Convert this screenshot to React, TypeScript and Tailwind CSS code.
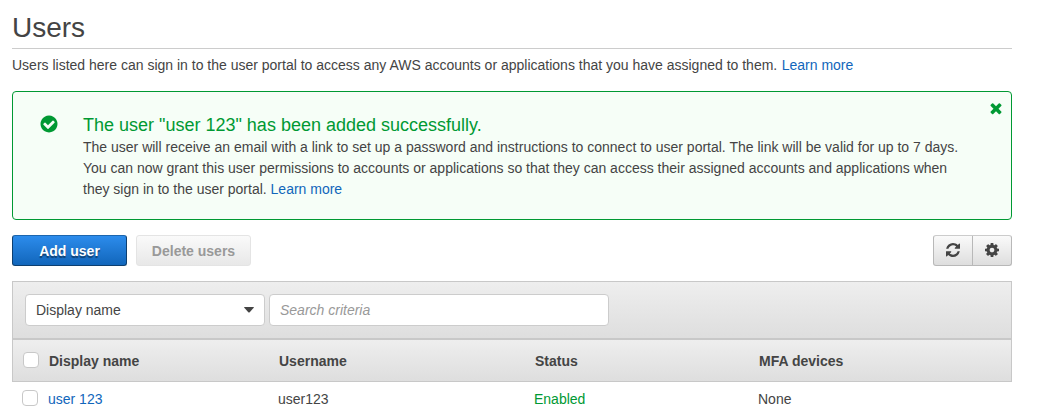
import type { ReactNode } from "react";

function Glyph({ path, viewBox, className }: { path: string; viewBox: string; className: string }) {
  return (
    <svg viewBox={viewBox} className={className} fill="currentColor" aria-hidden="true">
      <path d={path} />
    </svg>
  );
}

const CHECK =
  "M1412 734q0-28-18-46l-91-90q-19-19-45-19t-45 19l-408 407-226-226q-19-19-45-19t-45 19l-91 90q-18 18-18 46 0 27 18 45l362 362q19 19 45 19 27 0 46-19l543-543q18-18 18-45zm252 162q0 209-103 385.5t-279.5 279.5-385.5 103-385.5-103-279.5-279.5-103-385.5 103-385.5 279.5-279.5 385.5-103 385.5 103 279.5 279.5 103 385.5z";
const TIMES =
  "M1490 1322q0 40-28 68l-136 136q-28 28-68 28t-68-28l-294-294-294 294q-28 28-68 28t-68-28l-136-136q-28-28-28-68t28-68l294-294-294-294q-28-28-28-68t28-68l136-136q28-28 68-28t68 28l294 294 294-294q28-28 68-28t68 28l136 136q28 28 28 68t-28 68l-294 294 294 294q28 28 28 68z";
const REFRESH =
  "M1511 928q0 5-1 7-64 268-268 434.5t-478 166.5q-146 0-282.5-55t-243.5-157l-129 129q-19 19-45 19t-45-19-19-45v-448q0-26 19-45t45-19h448q26 0 45 19t19 45-19 45l-137 137q71 66 161 102t187 36q134 0 250-65t186-179q11-17 53-117 8-23 30-23h192q13 0 22.5 9.5t9.5 22.5zm25-800v448q0 26-19 45t-45 19h-448q-26 0-45-19t-19-45 19-45l138-138q-148-137-349-137-134 0-250 65t-186 179q-11 17-53 117-8 23-30 23h-199q-13 0-22.5-9.5t-9.5-22.5v-7q65-268 270-434.5t480-166.5q146 0 284 55.5t245 156.5l130-129q19-19 45-19t45 19 19 45z";
const COG =
  "M1152 896q0-106-75-181t-181-75-181 75-75 181 75 181 181 75 181-75 75-181zm512-109v222q0 12-8 23t-20 13l-185 28q-19 54-39 91 35 50 107 138 10 12 10 25t-9 23q-27 37-99 108t-94 71q-12 0-26-9l-138-108q-44 23-91 38-16 136-29 186-7 28-36 28h-222q-14 0-24.5-8.5t-11.5-21.5l-28-184q-49-16-90-37l-141 107q-10 9-25 9-14 0-25-11-126-114-165-168-7-10-7-23 0-12 8-23 15-21 51-66.5t54-70.5q-27-50-41-99l-183-27q-13-2-21-12.5t-8-23.5v-222q0-12 8-23t19-13l186-28q14-46 39-92-40-57-107-138-10-12-10-24 0-10 9-23 26-36 98.5-107.5t94.5-71.5q13 0 26 10l138 107q44-23 91-38 16-136 29-186 7-28 36-28h222q14 0 24.5 8.5t11.5 21.5l28 184q49 16 90 37l142-107q9-9 24-9 13 0 25 10 129 119 165 170 7 8 7 22 0 12-8 23-15 21-51 66.5t-54 70.5q26 50 41 98l183 28q13 2 21 12.5t8 23.5z";

function Link({ children }: { children: ReactNode }) {
  return (
    <a href="#" className="text-[#1166bb]">
      {children}
    </a>
  );
}

function Checkbox({ label }: { label: string }) {
  return (
    <input
      type="checkbox"
      aria-label={label}
      className="mb-0.5 size-4 shrink-0 appearance-none rounded-[4px] border border-[#c8c8c8] bg-white"
    />
  );
}

export default function App() {
  return (
    <main className="h-[413px] overflow-hidden bg-white pl-3 font-['Liberation_Sans',Arial,sans-serif] text-sm text-[#444]">
      <div className="w-[1000px]">
        <h1 className="h-[49px] border-b border-[#ccc] pt-3 text-[28px] leading-8">Users</h1>
        <p className="mt-1.5 leading-5">
          Users listed here can sign in to the user portal to access any AWS accounts or applications that you have
          assigned to them.<span className="pl-[0.6px]"> </span>
          <Link>Learn more</Link>
        </p>

        <section className="mt-4 flex h-[129px] rounded-[4px] border border-[#009933] bg-[#f6fef7] text-[#009933]">
          <div className="w-[70px] pt-[23px] pl-[27px]">
            <Glyph path={CHECK} viewBox="83 83 1626 1626" className="size-[18px]" />
          </div>
          <div className="w-[892px] pt-[22px]">
            <h2 className="text-lg leading-[22px]">The user "user 123" has been added successfully.</h2>
            <p className="mt-px leading-[21px] text-[#444]">
              The user will receive an email with a link to set up a password and instructions to connect to user
              portal. The link will be valid for up to 7 days.
              <br />
              You can now grant this user permissions to accounts or applications so that they can access their assigned
              accounts and applications when
              <br />
              they sign in to the user portal. <Link>Learn more</Link>
            </p>
          </div>
          <button aria-label="Dismiss" className="ml-[15px] h-fit pt-[11px]">
            <Glyph path={TIMES} viewBox="248 341 1296 1296" className="size-3" />
          </button>
        </section>

        <div className="mt-[15px] flex h-[31px]">
          <button className="w-[115px] rounded-[3px] border border-[#0d3f70] border-t-[#1c66ae] bg-linear-to-b from-[#2c8cec] to-[#1166bb] font-bold text-white [text-shadow:0_2px_1px_rgba(0,0,0,0.45)]">
            Add user
          </button>
          <button className="ml-[9px] w-[115px] rounded-[3px] border border-[#e4e4e4] bg-linear-to-b from-[#fafafa] to-[#e8e8e8] font-bold text-[#999]">
            Delete users
          </button>
          <div className="ml-auto flex w-[79px] rounded-[3px] border border-[#b8b8b8] border-t-[#ccc] bg-linear-to-b from-[#fafafa] to-[#dedede]">
            <button aria-label="Refresh" className="flex w-[39px] items-center justify-center border-r border-[#b8b8b8] pb-px">
              <Glyph path={REFRESH} viewBox="0 0 1536 1536" className="size-3.5" />
            </button>
            <button aria-label="Settings" className="flex w-[38px] items-center justify-center pb-px">
              <Glyph path={COG} viewBox="128 128 1536 1536" className="size-3.5" />
            </button>
          </div>
        </div>

        <div className="mt-[15px] flex h-[58px] gap-1 border border-[#c8c8c8] bg-linear-to-b from-[#eee] to-[#dedede] pt-3 pl-3">
          <button className="flex h-8 w-60 items-center justify-between rounded-[4px] border border-[#ccc] bg-white px-2.5">
            Display name
            <svg viewBox="0 0 10 6" className="h-1.5 w-2.5" fill="currentColor" aria-hidden="true">
              <path d="M.7 0h8.6q1 0 .4.8L5.7 5.2q-.7.6-1.4 0L.3.8Q-.3 0 .7 0z" />
            </svg>
          </button>
          <input
            type="text"
            placeholder="Search criteria"
            className="h-8 w-[340px] rounded-[4px] border border-[#ccc] bg-white px-2.5 placeholder:text-[#999] placeholder:italic"
          />
        </div>
        <div className="grid h-[43px] grid-cols-[26px_230px_256px_224px_1fr] items-center border border-[#c8c8c8] bg-linear-to-b from-[#eee] to-[#dedede] pl-2.5 font-bold">
          <Checkbox label="Select all users" />
          <span>Display name</span>
          <span>Username</span>
          <span>Status</span>
          <span>MFA devices</span>
        </div>
        <div className="grid h-[34px] grid-cols-[26px_230px_256px_224px_1fr] items-center pl-2.5">
          <Checkbox label="Select user 123" />
          <Link>user 123</Link>
          <span>user123</span>
          <span className="text-[#009933]">Enabled</span>
          <span>None</span>
        </div>
      </div>
    </main>
  );
}
